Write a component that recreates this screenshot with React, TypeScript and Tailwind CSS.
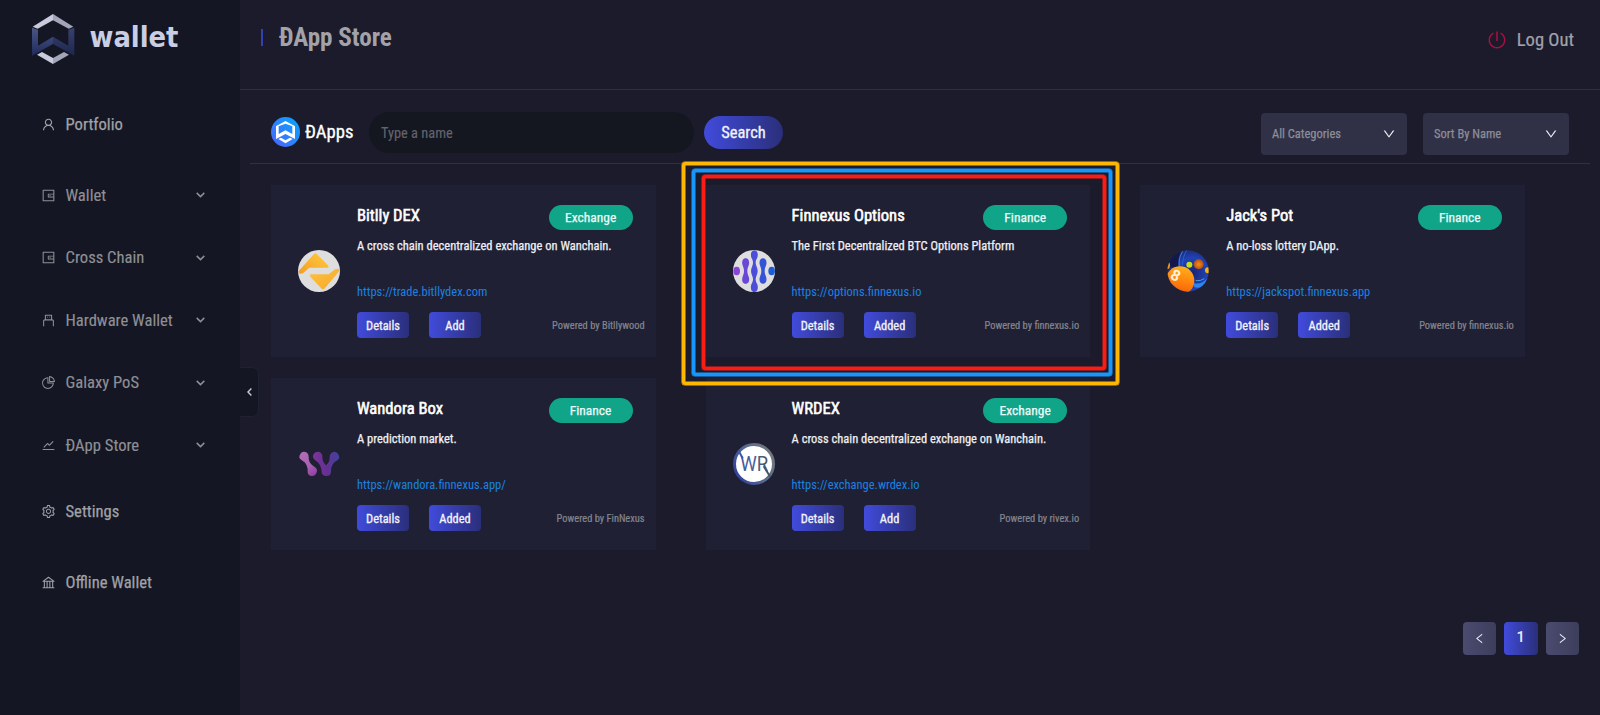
import type { ReactNode } from "react";
import {
  AiOutlineBank,
  AiOutlineDown,
  AiOutlineLeft,
  AiOutlinePieChart,
  AiOutlinePoweroff,
  AiOutlineRight,
  AiOutlineSetting,
  AiOutlineStock,
  AiOutlineUsb,
  AiOutlineUser,
  AiOutlineWallet,
} from "react-icons/ai";

/* ---------- logos ---------- */

function BrandMark() {
  return (
    <svg className="h-[65px] w-[60px] shrink-0" viewBox="0 0 180 195">
      <defs>
        <linearGradient id="brandSide" x1="0" y1="0" x2="0" y2="1">
          <stop offset="0" stopColor="#4a5683" />
          <stop offset="1" stopColor="#202b5c" />
        </linearGradient>
        <linearGradient id="brandSideR" x1="0" y1="0" x2="0" y2="1">
          <stop offset="0" stopColor="#38426f" />
          <stop offset="1" stopColor="#1d264e" />
        </linearGradient>
      </defs>
      <path d="M99 27 L38 65 L53 71 L99 46Z" fill="#c9cbdc" />
      <path d="M99 27 L160 65 L146 71 L99 46Z" fill="#a3a6b8" />
      <path d="M36 68 L54 74 V122 L99 95 V117 L36 152Z" fill="url(#brandSide)" />
      <path d="M163 68 L145 74 V122 L99 95 V117 L163 152Z" fill="url(#brandSideR)" />
      <path d="M51 149 L66 141 L99 159 V177Z" fill="#c9cbdc" />
      <path d="M147 149 L132 141 L99 159 V177Z" fill="#a3a6b8" />
    </svg>
  );
}

function DAppsMark() {
  return (
    <svg className="h-[30px] w-[29px] shrink-0" viewBox="0 0 87 90" preserveAspectRatio="none">
      <defs>
        <linearGradient id="dapps" x1="0" y1="1" x2="1" y2="0">
          <stop offset="0.1" stopColor="#4a68ff" />
          <stop offset="0.9" stopColor="#08a2ff" />
        </linearGradient>
      </defs>
      <ellipse cx="43.5" cy="45" rx="43.5" ry="45" fill="url(#dapps)" />
      <g fill="#fff">
        <path d="M43.500 12 L16 27 V30 L43.500 20 L71 30 V27Z" />
        <path d="M15 28 L23 25 V51 L43.500 40 L64 51 V25 L72 28 V66 L43.500 51 L15 66Z" />
        <path d="M22 66 L30 62 L43.500 70 L57 62 L65 66 L43.500 79Z" />
      </g>
    </svg>
  );
}

function BitllyLogo() {
  return (
    <svg className="size-[42px]" viewBox="0 0 126 126">
      <defs>
        <linearGradient id="bitUp" x1="0" y1="1" x2="1" y2="0">
          <stop offset="0" stopColor="#f79d1c" />
          <stop offset="1" stopColor="#fdcb45" />
        </linearGradient>
        <linearGradient id="bitLow" x1="0" y1="0" x2="1" y2="1">
          <stop offset="0" stopColor="#fcc244" />
          <stop offset="1" stopColor="#f9a825" />
        </linearGradient>
      </defs>
      <circle cx="63" cy="63" r="63" fill="#dededf" />
      <path
        d="M2 63 L48 12 Q52 8 56 12 L90 46 Q94 53 88 53 L34 53 L16 69 Q8 74 3 69Z"
        fill="url(#bitUp)"
      />
      <path
        d="M124 63 L79 116 Q75 120 71 116 L37 80 Q33 73 39 73 L92 73 L111 58 Q118 54 123 58Z"
        fill="url(#bitLow)"
      />
    </svg>
  );
}

function FinnexusLogo() {
  return (
    <svg className="size-[42px]" viewBox="0 0 126 126">
      <defs>
        <clipPath id="finClip">
          <circle cx="63" cy="63" r="63" />
        </clipPath>
      </defs>
      <g clipPath="url(#finClip)">
        <rect width="126" height="126" fill="#dededf" />
        <ellipse cx="11" cy="63" rx="10" ry="13" fill="#8a44d8" />
        <path
          d="M38 25 C46 25 50 33 48 43 C46 51 43 54 43 63 C43 72 46 75 48 83 C50 94 46 101 38 101 C30 101 26 94 28 83 C30 75 33 72 33 63 C33 54 30 51 28 43 C26 33 30 25 38 25Z"
          fill="#6a48d6"
        />
        <path
          d="M64 1 C76 1 76 18 72 25 C69 30 68 34 68 39 C68 46 74 54 74 63 C74 72 68 80 68 87 C68 92 69 96 72 101 C76 108 76 126 64 126 C52 126 52 108 56 101 C59 96 60 92 60 87 C60 80 54 72 54 63 C54 54 60 46 60 39 C60 34 59 30 56 25 C52 18 52 1 64 1Z"
          fill="#4c4dd8"
        />
        <path
          d="M90 25 C98 25 102 33 100 43 C98 51 95 54 95 63 C95 72 98 75 100 83 C102 94 98 101 90 101 C82 101 78 94 80 83 C82 75 85 72 85 63 C85 54 82 51 80 43 C78 33 82 25 90 25Z"
          fill="#3553d6"
        />
        <ellipse cx="116" cy="63" rx="10" ry="13" fill="#1c5cd8" />
      </g>
    </svg>
  );
}

function JackpotLogo() {
  return (
    <svg className="size-[42px]" viewBox="0 0 126 126">
      <defs>
        <clipPath id="jackClip">
          <circle cx="63" cy="63" r="62" />
        </clipPath>
        <radialGradient id="jackBg" cx="0.6" cy="0.55" r="0.6">
          <stop offset="0" stopColor="#16226f" />
          <stop offset="0.6" stopColor="#2143b4" />
          <stop offset="1" stopColor="#1a2878" />
        </radialGradient>
        <linearGradient id="jackBall" x1="0.7" y1="0" x2="0.5" y2="1">
          <stop offset="0" stopColor="#ffb01c" />
          <stop offset="0.6" stopColor="#ff7d0c" />
          <stop offset="1" stopColor="#f25a05" />
        </linearGradient>
        <radialGradient id="jackSmall">
          <stop offset="0.2" stopColor="#f7800f" />
          <stop offset="1" stopColor="#a8501f" />
        </radialGradient>
      </defs>
      <g clipPath="url(#jackClip)">
        <rect width="126" height="126" fill="url(#jackBg)" />
        <path d="M0 0 H44 Q30 26 34 52 H0Z" fill="#12184c" />
        <path d="M48 0 Q34 22 37 50" fill="none" stroke="#3f8fe0" strokeWidth="2.500" />
        <path d="M60 0 Q46 20 46 46" fill="none" stroke="#2a5fd0" strokeWidth="3" />
        <path d="M80 100 Q106 104 122 84 L126 92 Q112 118 82 112Z" fill="#2c86ec" />
        <path d="M86 92 Q100 94 112 86" fill="none" stroke="#4fb0f8" strokeWidth="2.500" />
        <ellipse cx="2" cy="46" rx="7" ry="11" fill="#f09a10" />
        <circle cx="67" cy="44" r="9" fill="#c6dc1c" />
        <circle cx="95" cy="43" r="15" fill="url(#jackSmall)" />
        <circle cx="123" cy="61" r="9" fill="#f9b112" />
        <circle cx="39" cy="92" r="43" fill="url(#jackBall)" />
        <text
          x="26"
          y="92"
          textAnchor="middle"
          transform="rotate(28 26 76)"
          className="fill-[#fff3df] font-['Roboto'] text-[46px] font-bold"
        >
          8
        </text>
      </g>
    </svg>
  );
}

function WandoraLogo() {
  return (
    <svg className="ml-px size-[42px]" viewBox="0 0 126 126">
      <defs>
        <linearGradient id="wanA" gradientUnits="userSpaceOnUse" x1="0" y1="26" x2="54" y2="98">
          <stop offset="0" stopColor="#b070b4" />
          <stop offset="0.6" stopColor="#a95fb2" />
          <stop offset="1" stopColor="#8a3aa0" />
        </linearGradient>
        <linearGradient id="wanB" gradientUnits="userSpaceOnUse" x1="42" y1="40" x2="120" y2="40">
          <stop offset="0" stopColor="#7e3499" />
          <stop offset="0.5" stopColor="#663091" />
          <stop offset="1" stopColor="#40429c" />
        </linearGradient>
      </defs>
      <path
        d="M14 26 C24 25 30 34 29 42 C29 56 34 62 44 70 C54 76 56 82 53 88 C51 95 47 99 39 99 C30 99 26 94 26 87 C27 78 24 66 17 58 C11 52 3 50 1 44 C1 34 6 27 14 26Z"
        fill="url(#wanA)"
      />
      <path
        d="M56 26 C66 26 71 34 70 41 C70 52 74 59 81 67 C89 60 93 52 92 41 C92 33 97 27 106 26 C116 26 121 38 121 44 C119 50 112 53 107 57 C99 64 96 74 96 86 C96 94 91 99 82 99 C73 99 68 94 68 87 C68 76 64 66 56 58 C51 53 43 49 42 42 C41 34 47 27 56 26Z"
        fill="url(#wanB)"
      />
    </svg>
  );
}

function WrdexLogo() {
  return (
    <svg className="size-[42px]" viewBox="0 0 126 126">
      <defs>
        <linearGradient id="wrRing" x1="0" y1="0.8" x2="1" y2="0.2">
          <stop offset="0" stopColor="#2f3f9c" />
          <stop offset="0.5" stopColor="#56688f" />
          <stop offset="1" stopColor="#74797c" />
        </linearGradient>
        <linearGradient id="wrText" x1="0" y1="0" x2="1" y2="0">
          <stop offset="0" stopColor="#3c55a4" />
          <stop offset="0.5" stopColor="#4b6199" />
          <stop offset="1" stopColor="#4a5560" />
        </linearGradient>
      </defs>
      <circle cx="63" cy="63" r="58.500" fill="#fff" stroke="url(#wrRing)" strokeWidth="9" />
      <path d="M16 22 L29 46" stroke="#3c55a4" strokeWidth="6" />
      <path d="M92 70 L112 102" stroke="#4a5560" strokeWidth="6" />
      <text
        x="22"
        y="83"
        textLength="84"
        lengthAdjust="spacingAndGlyphs"
        fill="url(#wrText)"
        className="font-['Roboto'] text-[60px]"
      >
        WR
      </text>
    </svg>
  );
}

/* ---------- sidebar ---------- */

type NavItem = { label: string; icon: ReactNode; sub?: boolean; box: string };

const nav: NavItem[] = [
  { label: "Portfolio", icon: <AiOutlineUser />, box: "h-[71px] mb-[4.5px]" },
  { label: "Wallet", icon: <AiOutlineWallet />, sub: true, box: "h-[62.5px]" },
  { label: "Cross Chain", icon: <AiOutlineWallet />, sub: true, box: "h-[62.5px]" },
  { label: "Hardware Wallet", icon: <AiOutlineUsb />, sub: true, box: "h-[62.5px]" },
  { label: "Galaxy PoS", icon: <AiOutlinePieChart />, sub: true, box: "h-[62.5px]" },
  { label: "ĐApp Store", icon: <AiOutlineStock />, sub: true, box: "h-[62.5px]" },
  { label: "Settings", icon: <AiOutlineSetting />, box: "h-[70.5px]" },
  { label: "Offline Wallet", icon: <AiOutlineBank />, box: "h-[70.5px]" },
];

function Sidebar() {
  return (
    <aside className="relative flex w-60 shrink-0 flex-col bg-[#141623]">
      <div className="flex h-[88.5px] items-start pt-[5px] pl-5">
        <BrandMark />
        <svg className="mt-[8px] ml-[9px] h-[46px] w-[98px] overflow-visible" viewBox="0 0 98 46">
          <text
            x="0.5"
            y="34"
            textLength="89"
            lengthAdjust="spacingAndGlyphs"
            className="fill-[#cbcee3] font-['DejaVu_Sans'] text-[28px] font-bold"
          >
            wallet
          </text>
        </svg>
      </div>
      <nav className="flex flex-col">
        {nav.map((item) => (
          <a
            key={item.label}
            className={`flex items-center pl-[40.5px] text-[16.6px] leading-none ${item.box} ${
              item.sub
                ? "text-[#8f9096] [-webkit-text-stroke:0.15px_#8f9096]"
                : "text-[#a1a2a7] [-webkit-text-stroke:0.25px_#a1a2a7]"
            }`}
          >
            <span className="w-[25px] text-[15px]">{item.icon}</span>
            <span className="w-[130px] pt-[2px] whitespace-nowrap">{item.label}</span>
            {item.sub && (
              <svg className="h-[6px] w-[9px]" viewBox="0 0 9 6" fill="none">
                <path d="M0.700 0.900 L4.500 4.600 L8.300 0.900" stroke="currentColor" strokeWidth="1.500" />
              </svg>
            )}
          </a>
        ))}
      </nav>
      <div className="absolute top-[367px] left-60 flex h-[50px] w-[18.5px] items-center justify-center rounded-r-[7px] border border-l-0 border-[#1f2133] bg-[#141623] pl-[2px]">
        <svg className="-mt-px h-[8px] w-[5px]" viewBox="0 0 5 8" fill="none">
          <path d="M4.400 0.600 L1 4 L4.400 7.400" stroke="#c9cad2" strokeWidth="1.400" />
        </svg>
      </div>
    </aside>
  );
}

/* ---------- cards ---------- */

type DApp = {
  name: string;
  tag: string;
  desc: string;
  url: string;
  action: string;
  by: string;
  logo: ReactNode;
  highlight?: boolean;
};

const dapps: DApp[] = [
  {
    name: "Bitlly DEX",
    tag: "Exchange",
    desc: "A cross chain decentralized exchange on Wanchain.",
    url: "https://trade.bitllydex.com",
    action: "Add",
    by: "Bitllywood",
    logo: <BitllyLogo />,
  },
  {
    name: "Finnexus Options",
    tag: "Finance",
    desc: "The First Decentralized BTC Options Platform",
    url: "https://options.finnexus.io",
    action: "Added",
    by: "finnexus.io",
    logo: <FinnexusLogo />,
    highlight: true,
  },
  {
    name: "Jack's Pot",
    tag: "Finance",
    desc: "A no-loss lottery DApp.",
    url: "https://jackspot.finnexus.app",
    action: "Added",
    by: "finnexus.io",
    logo: <JackpotLogo />,
  },
  {
    name: "Wandora Box",
    tag: "Finance",
    desc: "A prediction market.",
    url: "https://wandora.finnexus.app/",
    action: "Added",
    by: "FinNexus",
    logo: <WandoraLogo />,
  },
  {
    name: "WRDEX",
    tag: "Exchange",
    desc: "A cross chain decentralized exchange on Wanchain.",
    url: "https://exchange.wrdex.io",
    action: "Add",
    by: "rivex.io",
    logo: <WrdexLogo />,
  },
];

function SmallButton({ children }: { children: ReactNode }) {
  return (
    <button className="h-[26px] w-[52px] rounded-[4px] bg-linear-to-r from-[#414bdc] to-[#2a2f7b] pt-[2px] text-center text-[12.4px] leading-none text-[#f2f3fa] [-webkit-text-stroke:0.3px_#f2f3fa]">
      {children}
    </button>
  );
}

function Card({ app }: { app: DApp }) {
  return (
    <article className="relative flex h-[172px] w-[384.6px] bg-[#1f2033]">
      <div className="flex w-[86px] shrink-0 items-center pl-[27px]">{app.logo}</div>
      <div className="flex min-w-0 grow flex-col pt-5">
        <div className="flex h-[25px] items-center justify-between pr-[23px]">
          <h3 className="-mt-[2px] text-[16.6px] leading-none text-white [-webkit-text-stroke:0.55px_white]">{app.name}</h3>
          <span className="flex h-[25px] w-[84px] items-center justify-center rounded-full bg-[#10a489] text-[13.5px] leading-none text-[#eefaf7] [-webkit-text-stroke:0.25px_#eefaf7]">
            {app.tag}
          </span>
        </div>
        <p className="h-[46px] text-[12.47px] leading-[31px] whitespace-nowrap text-[#f0f0f3] [-webkit-text-stroke:0.25px_#f0f0f3]">
          {app.desc}
        </p>
        <a className="text-[12.47px] leading-[31px] text-[#1a82e2]">{app.url}</a>
        <div className="mt-[5px] flex items-center pr-[11px]">
          <SmallButton>Details</SmallButton>
          <span className="w-5" />
          <SmallButton>{app.action}</SmallButton>
          <span className="mt-[3px] ml-auto text-[10.41px] leading-none whitespace-nowrap text-[#84858f] [-webkit-text-stroke:0.2px_#84858f]">
            Powered by {app.by}
          </span>
        </div>
      </div>
      {app.highlight && (
        <>
          <div className="absolute -top-[23.500px] -left-[23.500px] z-10 h-[223px] w-[437px] rounded-[3px] border-[3px] border-[#fdb602] shadow-[0_0_0_0.5px_#fdb602,inset_0_0_0_0.5px_#fdb602]" />
          <div className="absolute -top-[16.500px] -left-[13.500px] z-10 h-[207px] w-[420px] rounded-[3px] border-[3px] border-[#1797fb] shadow-[0_0_0_0.5px_#1797fb,inset_0_0_0_0.5px_#1797fb]" />
          <div className="absolute -top-[10.500px] -left-[3.500px] z-10 h-[195.5px] w-[404px] rounded-[3px] border-[3px] border-[#f91d14] shadow-[0_0_0_0.5px_#f91d14,inset_0_0_0_0.5px_#f91d14]" />
        </>
      )}
    </article>
  );
}

function Select({ label }: { label: string }) {
  return (
    <div className="flex h-[42px] w-[146px] items-center justify-between rounded-[4px] bg-[#303147] pr-[11px] pl-[11px] text-[12.47px] leading-none text-[#8c8d98] [-webkit-text-stroke:0.25px_#8c8d98]">
      <span className="pt-px">{label}</span>
      <AiOutlineDown className="-mt-px size-[14px] text-[#f4f4f8]" />
    </div>
  );
}

export default function App() {
  return (
    <div className="flex h-[715px] w-[1600px] overflow-hidden bg-[#1b1b2c] font-['Roboto_Condensed',Roboto,sans-serif]">
      <Sidebar />
      <main className="flex grow flex-col">
        <header className="flex h-[90px] items-start border-b border-[#2f3040] pr-[26px] pl-[21px]">
          <span className="mt-[29px] h-[17px] w-[2px] bg-[#353fb8]" />
          <h1 className="mt-[25px] ml-[16px] text-[25.1px] leading-[26px] font-bold text-[#a2a2a8]">ĐApp Store</h1>
          <a className="mt-[29px] ml-auto flex items-center text-[18.6px] leading-5 text-[#a2a2a8] [-webkit-text-stroke:0.2px_#a2a2a8]">
            <AiOutlinePoweroff className="mr-[10px] size-[20px] text-[#ab0f42]" />
            <span className="pt-px">Log Out</span>
          </a>
        </header>

        <section className="mx-[10px] flex h-[74px] items-start border-b border-[#2f3040] pl-[21px]">
          <div className="mt-[27px] flex items-center">
            <DAppsMark />
            <span className="ml-[5px] w-[64px] text-[18.7px] leading-none text-white [-webkit-text-stroke:0.3px_white]">
              ĐApps
            </span>
          </div>
          <div className="mt-[22px] flex h-[41px] w-[325px] items-center rounded-full bg-[#141620] pt-[3px] pl-[12px] text-[14.4px] leading-none text-[#62636d] [-webkit-text-stroke:0.15px_#62636d]">
            Type a name
          </div>
          <button className="mt-[26px] ml-[10px] h-[33px] w-[79px] rounded-full bg-linear-to-r from-[#414bdc] to-[#2a2f7b] pt-px text-[16.5px] leading-none text-[#f2f3fa] [-webkit-text-stroke:0.3px_#f2f3fa]">
            Search
          </button>
          <div className="mt-[23px] mr-[21px] ml-auto flex gap-[16px]">
            <Select label="All Categories" />
            <Select label="Sort By Name" />
          </div>
        </section>

        <section className="ml-[31px] grid grid-cols-[repeat(3,434.6px)] gap-y-[21px] pt-[21px]">
          {dapps.map((app) => (
            <Card key={app.name} app={app} />
          ))}
        </section>

        <footer className="mt-auto mr-[21px] mb-[60px] flex justify-end gap-[8.5px] text-[#eceef5]">
          <button className="flex size-[33px] items-center justify-center rounded-[4px] bg-linear-to-r from-[#4b4b70] to-[#3d3d5c]">
            <AiOutlineLeft className="size-[13px]" />
          </button>
          <button className="flex size-[33.5px] items-center justify-center rounded-[4px] bg-linear-to-r from-[#414bdc] to-[#2a2f7b] pb-[2px] font-['Roboto'] text-[14.6px] leading-none font-medium">
            1
          </button>
          <button className="flex size-[33px] items-center justify-center rounded-[4px] bg-linear-to-r from-[#4b4b70] to-[#3d3d5c]">
            <AiOutlineRight className="size-[13px]" />
          </button>
        </footer>
      </main>
    </div>
  );
}
